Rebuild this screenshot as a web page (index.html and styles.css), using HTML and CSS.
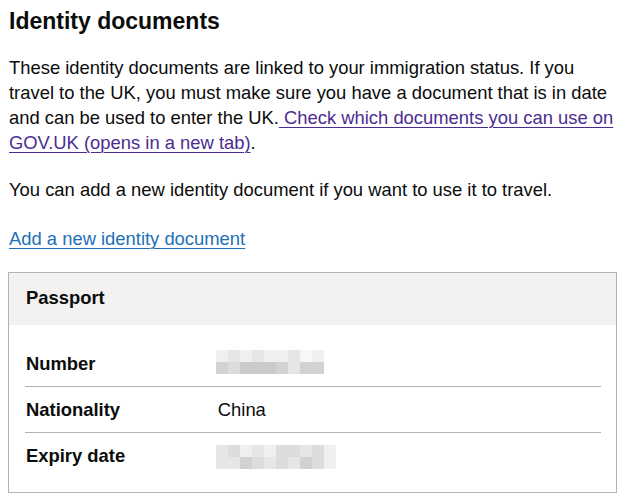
FILE: index.html
```html
<!DOCTYPE html>
<html lang="en">
<head>
<meta charset="utf-8">
<title>Identity documents</title>
<link rel="stylesheet" href="styles.css">
</head>
<body>
<main class="page">
  <h1 class="heading">Identity documents</h1>
  <p class="body">These identity documents are linked to your immigration status. If you travel to the UK, you must make sure you have a document that is in date and can be used to enter the UK.<a class="link link-visited" href="#"> Check which documents you can use on GOV.UK (opens in a new tab)</a>.</p>
  <p class="body body-gap">You can add a new identity document if you want to use it to travel.</p>
  <p class="body link-row"><a class="link" href="#">Add a new identity document</a></p>

  <section class="card">
    <div class="card-title-wrap">
      <h2 class="card-title">Passport</h2>
    </div>
    <dl class="card-content">
      <div class="row">
        <dt class="key">Number</dt>
        <dd class="value">
          <span class="mosaic mosaic-9">
            <span class="c1"></span><span class="c2"></span><span class="c1"></span><span class="c2"></span><span class="c1"></span><span class="c1"></span><span class="c2"></span><span class="c0"></span><span class="c1"></span>
            <span class="c4"></span><span class="c3"></span><span class="c5"></span><span class="c5"></span><span class="c5"></span><span class="c4"></span><span class="c2"></span><span class="c4"></span><span class="c4"></span>
          </span>
        </dd>
      </div>
      <div class="row">
        <dt class="key">Nationality</dt>
        <dd class="value">China</dd>
      </div>
      <div class="row row-last">
        <dt class="key">Expiry date</dt>
        <dd class="value">
          <span class="mosaic mosaic-10">
            <span class="c2"></span><span class="c3"></span><span class="c1"></span><span class="c2"></span><span class="c1"></span><span class="c3"></span><span class="c3"></span><span class="c2"></span><span class="c3"></span><span class="c1"></span>
            <span class="c2"></span><span class="c2"></span><span class="c4"></span><span class="c3"></span><span class="c2"></span><span class="c3"></span><span class="c2"></span><span class="c4"></span><span class="c3"></span><span class="c1"></span>
          </span>
        </dd>
      </div>
    </dl>
  </section>
</main>
</body>
</html>
```

FILE: styles.css
```css
* { box-sizing: border-box; }

html, body {
  margin: 0;
  padding: 0;
  background: #ffffff;
}

body {
  font-family: "Liberation Sans", Arial, sans-serif;
  color: #0b0c0c;
}

.page {
  padding: 0 7px 0 8px;
}

.heading {
  margin: 6px 0 19px 1px;
  font-size: 23px;
  line-height: 30px;
  font-weight: 700;
}

.body {
  margin: 0 0 0 1px;
  font-size: 18.4px;
  line-height: 25px;
}

.body-gap {
  margin-top: 22px;
}

.link-row {
  margin-top: 24px;
}

.link {
  color: #1d70b8;
  text-decoration: underline;
  text-decoration-thickness: 1px;
  text-underline-offset: 0.16em;
}

.link-visited {
  color: #4c2c92;
}

.card {
  margin-top: 21px;
  border: 1px solid #b1b4b6;
}

.card-title-wrap {
  background: #f3f2f1;
  padding: 12px 16px 15px 17px;
}

.card-title {
  margin: 0;
  font-size: 18.4px;
  line-height: 25px;
  font-weight: 700;
}

.card-content {
  margin: 0;
  padding: 16px 15px 13px 16px;
}

.row {
  display: grid;
  grid-template-columns: 30% 1fr;
  column-gap: 20px;
  padding: 10px 0;
  border-bottom: 1px solid #b1b4b6;
}

.row-last {
  border-bottom: 0;
}

.key {
  margin: 0;
  padding-left: 1px;
  font-size: 18.4px;
  line-height: 25px;
  font-weight: 700;
}

.value {
  margin: 0;
  font-size: 18.4px;
  line-height: 25px;
  display: flex;
  align-items: center;
}

.mosaic {
  display: inline-grid;
  grid-auto-rows: 12px;
  margin-left: -2px;
}

.mosaic-9 { grid-template-columns: repeat(9, 12px); margin-top: -3px; }
.mosaic-10 { grid-template-columns: repeat(10, 12px); margin-top: 2px; }

.c0 { background: #f7f7f7; }
.c1 { background: #efefef; }
.c2 { background: #e6e6e6; }
.c3 { background: #dcdcdc; }
.c4 { background: #d2d2d2; }
.c5 { background: #cacaca; }
```
